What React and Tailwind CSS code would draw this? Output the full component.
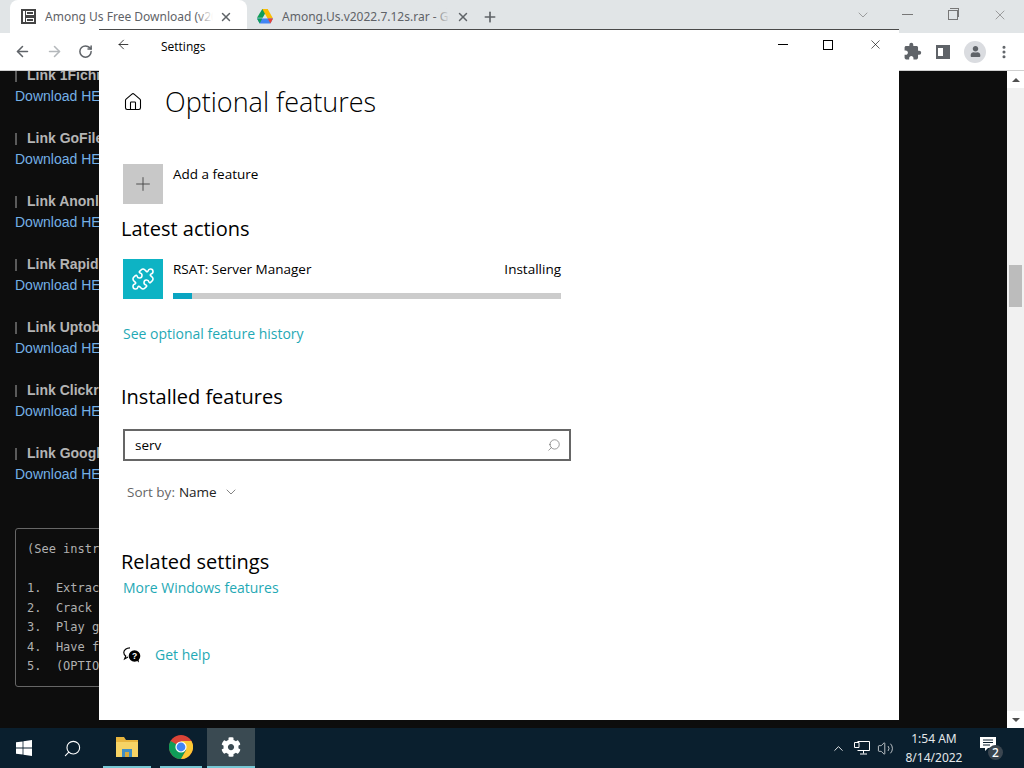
import React from 'react';
import { ArrowLeft, ArrowRight, RotateCw, Plus, X, Home, Puzzle, Search, ChevronDown, ChevronUp, Volume2, MoreVertical } from 'lucide-react';
import { FaCog, FaUser } from 'react-icons/fa';
import { MdExtension } from 'react-icons/md';

const LINKS = ['1Fichi', 'GoFile', 'Anonl', 'Rapid', 'Uptob', 'Clickr', 'Googl'];
const STEPS = ['1.  Extrac', '2.  Crack', '3.  Play g', '4.  Have f', '5.  (OPTIO'];

const DriveIcon = () => (
  <svg width="16" height="15" viewBox="0 0 16 15">
    <path d="M5.3 0h5.4l-5 8.8H0z" fill="#0f9d58" transform="translate(0 0)" />
    <path d="M5.3 0h5.4L16 9.5h-5.4z" fill="#fbbc04" />
    <path d="M0 9.5h16L13.4 14.5H2.7z" fill="#4285f4" />
    <path d="M0 9.5h5.3L2.7 14.5z" fill="#0f9d58" />
    <path d="M10.7 9.5H16l-2.6 5z" fill="#ea4335" />
  </svg>
);

const ChromeIcon = () => (
  <svg width="24" height="24" viewBox="0 0 24 24">
    <circle cx="12" cy="12" r="12" fill="#db4437" />
    <path d="M12 12 1.6 6A12 12 0 0 0 12 24l6-10.4z" fill="#0f9d58" />
    <path d="M12 6h10.4A12 12 0 0 1 12 24l5.2-9z" fill="#fcc934" />
    <circle cx="12" cy="12" r="5.6" fill="#fff" />
    <circle cx="12" cy="12" r="4.4" fill="#4285f4" />
  </svg>
);

const FolderIcon = () => (
  <svg width="24" height="22" viewBox="0 0 24 22">
    <path d="M1 1h8l2 3h12v17H1z" fill="#e8b53e" />
    <path d="M1 6h22v15H1z" fill="#f6d365" />
    <path d="M7 13h10v8H7z" fill="#3f8ec4" />
    <path d="M10 16h4v5h-4z" fill="#d6a93a" />
  </svg>
);

const WindowsLogo = () => (
  <svg width="16" height="16" viewBox="0 0 16 16" fill="#fff">
    <path d="M0 2.3 6.6 1.4v6.2H0zM7.4 1.3 16 0v7.6H7.4zM0 8.4h6.6v6.2L0 13.7zM7.4 8.4H16V16l-8.6-1.3z" />
  </svg>
);

const HelpIcon = () => (
  <svg width="18" height="16" viewBox="0 0 18 16">
    <path d="M7 .8C3.5.8.8 2.9.8 5.6c0 1.4.7 2.6 1.9 3.5L1.6 12l3.4-1.9" fill="none" stroke="#000" strokeWidth="1.2" />
    <circle cx="11.5" cy="9" r="5.8" fill="#000" />
    <path d="m13 13 3 2.6-.6-4z" fill="#000" />
    <text x="11.5" y="12" textAnchor="middle" fontSize="8.5" fontWeight="700" fill="#fff" fontFamily="Liberation Sans, sans-serif">?</text>
  </svg>
);

const NetworkIcon = () => (
  <svg width="16" height="14" viewBox="0 0 16 14" fill="none" stroke="#fff" strokeWidth="1">
    <path d="M3.5.5h12v9h-12M9.5 9.5v3M6 13h7" />
    <path d="M.5 1.5h4.5v5H.5z" fill="#0a1f2e" />
  </svg>
);

const ActionBadge = () => (
  <div className="relative w-[22px] h-[26px]">
    <svg width="16" height="15" viewBox="0 0 16 15" className="absolute left-0 top-[2px]">
      <path d="M0 0h16v11H8l-3 3v-3H0z" fill="#fff" />
      <path d="M3 3h10M3 5.5h10M3 8h7" stroke="#0a1f2e" />
    </svg>
    <div className="absolute left-[8px] top-[10px] w-[15px] h-[15px] rounded-full bg-[#3b4650] text-white text-[12px] font-['Noto_Sans',sans-serif] font-medium flex items-center justify-center">2</div>
  </div>
);

const LinkRow = ({ name }) => (
  <div className="h-[63px] font-['Liberation_Sans',sans-serif] text-[14px] leading-[21px]">
    <div className="flex items-center text-[#b4b4b4] font-bold">
      <span className="w-[2px] h-[12px] bg-[#5a5a5a] mr-[10px]"></span>
      <span>Link {name}</span>
    </div>
    <div className="text-[#74b0e6]">Download HERE</div>
  </div>
);

const ChromeTab = ({ icon, title, active }) => (
  <div className={`relative flex items-center h-full px-[10px] ${active ? 'w-[237px] bg-white rounded-t-lg' : 'w-[236px]'}`}>
    <span className="w-[16px] flex justify-center mr-[9px]">{icon}</span>
    <span className="w-[168px] overflow-hidden whitespace-nowrap text-[12px] text-[#5f6368] relative">
      {title}
      <span className={`absolute right-0 top-0 bottom-0 w-[16px] bg-linear-to-r from-transparent ${active ? 'to-white' : 'to-[#e1e5e7]'}`}></span>
    </span>
    <X size={14} strokeWidth={2.5} className="ml-[6px] text-[#5f6368]" />
  </div>
);

const BrowserChrome = () => (
  <>
    {/* tab strip */}
    <div className="h-[33px] bg-[#e1e5e7] flex items-stretch pl-[10px] pt-0 font-['Noto_Sans',sans-serif] shrink-0">
      <ChromeTab
        active
        title="Among Us Free Download (v2022.7.12s)"
        icon={
          <span className="w-[15px] h-[15px] flex bg-[#444] p-[2px] gap-[1px]">
            <span className="w-[2px] bg-white"></span>
            <span className="flex-1 flex flex-col justify-between">
              <span className="h-[4px] border border-white"></span>
              <span className="h-[4px] border border-white"></span>
            </span>
          </span>
        }
      />
      <ChromeTab title="Among.Us.v2022.7.12s.rar - Google Drive" icon={<DriveIcon />} />
      <div className="flex items-center ml-[-1px]">
        <Plus size={16} strokeWidth={2.5} className="text-[#5f6368]" />
      </div>
      <div className="ml-auto flex items-center text-[#777] pr-[16px] pb-[4px]">
        <ChevronDown size={16} strokeWidth={1} className="mr-[31px]" />
        <div className="w-[11px] h-[1px] bg-[#777] mr-[35px]"></div>
        <div className="relative w-[10px] h-[10px] border border-[#777] mr-[34px]">
          <div className="absolute left-[1px] top-[-3px] w-[9px] h-[9px] border-t border-r border-[#777]"></div>
        </div>
        <X size={16} strokeWidth={1} />
      </div>
    </div>
    {/* toolbar */}
    <div className="h-[38px] bg-white border-b border-[#d0d0d0] flex items-center px-[14px] text-[#5f6368] shrink-0">
      <ArrowLeft size={17} strokeWidth={2.2} />
      <ArrowRight size={17} strokeWidth={2.2} className="ml-[15px] text-[#b4b8bb]" />
      <RotateCw size={15} strokeWidth={2.4} className="ml-[15px]" />
      <div className="ml-auto flex items-center">
        <MdExtension size={19} className="mr-[14px]" />
        <div className="w-[14px] h-[14px] border-[3px] border-[#5f6368] border-l-[2px] mr-[14px] flex justify-end">
          <div className="w-[4px] bg-[#5f6368]"></div>
        </div>
        <div className="w-[22px] h-[22px] rounded-full bg-[#dadce0] flex items-center justify-center mr-[10px]">
          <FaUser size={11} />
        </div>
        <MoreVertical size={16} strokeWidth={2.6} className="mr-[-2px]" />
      </div>
    </div>
  </>
);

const PageBehind = () => (
  <div className="flex-1 flex min-h-0 bg-[#0d0d0d]">
    <div className="flex-1 overflow-hidden pl-[15px] relative">
      <div className="mt-[-6px]">
        {LINKS.map((name) => (
          <LinkRow key={name} name={name} />
        ))}
      </div>
      <div className="mt-[22px] w-[300px] h-[159px] border border-[#666] rounded-[3px] pl-[11px] pt-[11px] font-['DejaVu_Sans_Mono',monospace] text-[12px] leading-[19.5px] text-[#b0b0b0] whitespace-pre">
        <div>(See instr</div>
        <div>&nbsp;</div>
        {STEPS.map((s) => (
          <div key={s}>{s}</div>
        ))}
      </div>
    </div>
    {/* scrollbar */}
    <div className="w-[17px] bg-[#f1f1f1] flex flex-col items-center relative">
      <div className="h-[17px] w-full flex items-center justify-center bg-white">
        <div className="w-0 h-0 border-l-[4px] border-r-[4px] border-b-[4px] border-transparent border-b-[#505050]"></div>
      </div>
      <div className="mt-[177px] w-[13px] h-[42px] bg-[#bcbcbc]"></div>
      <div className="mt-auto h-[17px] w-full flex items-center justify-center bg-white">
        <div className="w-0 h-0 border-l-[4px] border-r-[4px] border-t-[4px] border-transparent border-t-[#505050]"></div>
      </div>
    </div>
  </div>
);

const SectionTitle = ({ children, className }) => (
  <h2 className={`ml-[-2px] text-[20px] leading-[28px] text-black ${className}`}>{children}</h2>
);

const TealLink = ({ children, className }) => (
  <div className={`text-[14px] leading-[20px] text-[#1fa9b5] ${className}`}>{children}</div>
);

const SettingsWindow = () => (
  <div className="absolute left-[99px] top-[29px] w-[800px] h-[691px] bg-white border-t border-[#4a4a4a] font-['Open_Sans',sans-serif] text-black px-[24px]">
    {/* title bar */}
    <div className="h-[32px] flex items-center -mx-[24px] pl-[17px] pr-[16px]">
      <ArrowLeft size={15} strokeWidth={1.2} className="mt-[-3px]" />
      <span className="ml-[30px] text-[12px] leading-[32px] mt-[1px]">Settings</span>
      <div className="ml-auto flex items-center mt-[-3px]">
        <div className="w-[10px] h-[1px] bg-black mr-[35px]"></div>
        <div className="w-[10px] h-[10px] border border-black mr-[35px]"></div>
        <X size={15} strokeWidth={1} />
      </div>
    </div>
    {/* heading */}
    <div className="flex items-center mt-[20px] h-[40px]">
      <Home size={20} strokeWidth={1.3} />
      <h1 className="ml-[22px] text-[27px] leading-[40px] font-light">Optional features</h1>
    </div>
    {/* add a feature */}
    <div className="flex mt-[42px]">
      <div className="w-[40px] h-[40px] bg-[#c8c8c8] flex items-center justify-center">
        <Plus size={22} strokeWidth={1} className="text-[#444]" />
      </div>
      <span className="ml-[10px] text-[13.5px] leading-[20px]">Add a feature</span>
    </div>
    <SectionTitle className="mt-[11px]">Latest actions</SectionTitle>
    {/* install row */}
    <div className="flex mt-[16px] w-[438px]">
      <div className="w-[40px] h-[40px] bg-[#0db3c4] flex items-center justify-center">
        <Puzzle size={24} strokeWidth={1.6} className="text-white" />
      </div>
      <div className="ml-[10px] flex-1 flex flex-col">
        <div className="flex justify-between text-[13.5px] leading-[20px]">
          <span>RSAT: Server Manager</span>
          <span>Installing</span>
        </div>
        <div className="mt-auto h-[6px] bg-[#cccccc] mb-[0px]">
          <div className="w-[19px] h-full bg-[#0aa5c2]"></div>
        </div>
      </div>
    </div>
    <TealLink className="mt-[25px]">See optional feature history</TealLink>
    <SectionTitle className="mt-[39px]">Installed features</SectionTitle>
    {/* search box */}
    <div className="mt-[18px] w-[448px] h-[32px] border-2 border-[#666] flex items-center pl-[10px] pr-[8px] justify-between">
      <span className="text-[13.5px]">serv</span>
      <Search size={14} strokeWidth={1} className="text-[#555] -scale-x-100" />
    </div>
    <div className="mt-[21px] ml-[4px] flex items-center text-[13.5px] leading-[20px]">
      <span className="text-[#666]">Sort by:</span>
      <span className="ml-[4px] text-[#222]">Name</span>
      <ChevronDown size={16} strokeWidth={1} className="ml-[6px] text-[#444]" />
    </div>
    <SectionTitle className="mt-[46px]">Related settings</SectionTitle>
    <TealLink className="mt-[2px]">More Windows features</TealLink>
    {/* help */}
    <div className="flex items-center mt-[47px]">
      <HelpIcon />
      <TealLink className="ml-[14px]">Get help</TealLink>
    </div>
  </div>
);

const Taskbar = () => (
  <div className="h-[40px] bg-[#0a1f2e] flex items-stretch text-white shrink-0 font-['Noto_Sans',sans-serif]">
    <div className="w-[48px] flex items-center justify-center"><WindowsLogo /></div>
    <div className="w-[48px] flex items-center justify-center">
      <Search size={19} strokeWidth={1.4} className="-scale-x-100" />
    </div>
    <div className="w-[8px]"></div>
    <div className="w-[48px] flex items-center justify-center border-b-2 border-[#76c7d4] mx-[-1px]"><FolderIcon /></div>
    <div className="w-[8px]"></div>
    <div className="w-[42px] ml-[2px] flex items-center justify-center border-b-2 border-[#76c7d4]"><ChromeIcon /></div>
    <div className="w-[48px] ml-[5px] bg-[#3a4a52] flex items-center justify-center border-b-2 border-[#76c7d4]">
      <FaCog size={20} />
    </div>
    {/* tray */}
    <div className="ml-auto flex items-center">
      <ChevronUp size={15} strokeWidth={1.4} />
      <span className="ml-[8px]"><NetworkIcon /></span>
      <Volume2 size={17} strokeWidth={1} className="ml-[7px]" />
      <div className="ml-[8px] w-[64px] text-center text-[12px] leading-[19px] text-[#e4e8ea]">
        <div>1:54 AM</div>
        <div>8/14/2022</div>
      </div>
      <div className="ml-[14px] mr-[22px]"><ActionBadge /></div>
    </div>
  </div>
);

export default function App() {
  return (
    <div className="relative w-[1024px] h-[768px] overflow-hidden flex flex-col bg-black">
      <BrowserChrome />
      <PageBehind />
      <Taskbar />
      <SettingsWindow />
    </div>
  );
}
